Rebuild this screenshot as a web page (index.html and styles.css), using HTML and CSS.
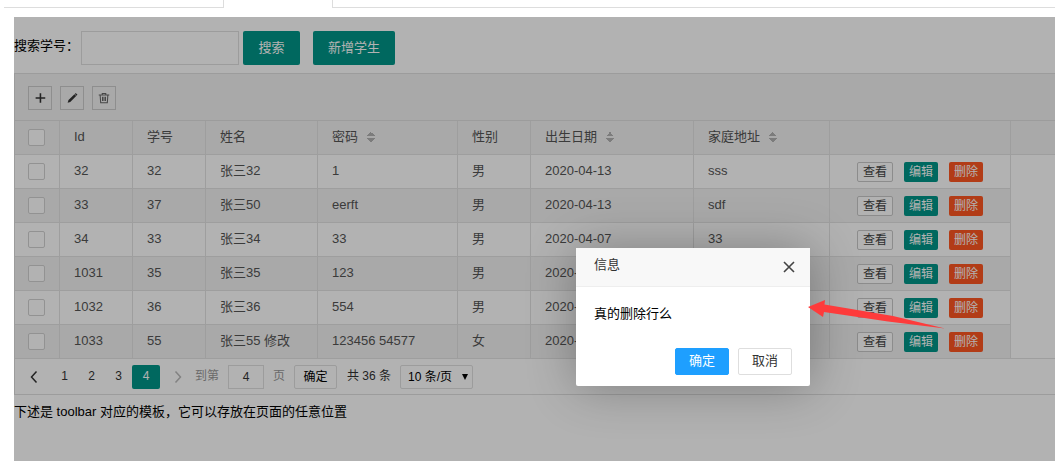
FILE: index.html
```html
<!DOCTYPE html>
<html lang="zh-CN">
<head>
<meta charset="utf-8">
<title>学生管理</title>
<link rel="stylesheet" href="styles.css">
</head>
<body>
<div class="tabs"><div class="tab tab-left"></div><div class="tab-active"></div><div class="tab tab-right"></div></div>
<main class="panel">
  <form class="search">
    <label for="sno">搜索学号：</label>
    <input id="sno" class="search-input" type="text">
    <button class="btn" type="button">搜索</button>
    <button class="btn btn-add" type="button">新增学生</button>
  </form>
  <section class="grid">
    <div class="toolbar">
      <button type="button" class="tool" aria-label="添加"><svg viewBox="0 0 16 16"><path d="M8.500 2.500v11M3 8h11" stroke="#333" stroke-width="1.800"/></svg></button>
      <button type="button" class="tool" aria-label="编辑"><svg viewBox="0 0 16 16"><path d="M3 13.500l1-3.200 6.800-6.500 2 2L6 12.500z" fill="#333"/><path d="M11.300 3.300l1-.9 1.900 1.900-1 1z" fill="#333"/></svg></button>
      <button type="button" class="tool" aria-label="删除"><svg viewBox="0 0 16 16" fill="none" stroke="#666" stroke-width="1.200"><path d="M2 4.500h12M6 4.500V2.800h4v1.700M3.600 4.500l.6 9h7.600l.6-9M6.300 6.500v5M8 6.500v5M9.700 6.500v5"/></svg></button>
    </div>
    <table class="table">
      <colgroup><col class="c-check"><col class="c-s"><col class="c-s"><col class="c-name"><col class="c-pwd"><col class="c-s"><col class="c-date"><col class="c-addr"><col class="c-ops"><col></colgroup>
      <thead><tr>
        <th><input type="checkbox" aria-label="全选"></th><th>Id</th><th>学号</th><th>姓名</th>
        <th>密码<span class="sort"></span></th><th>性别</th><th>出生日期<span class="sort"></span></th><th>家庭地址<span class="sort"></span></th><th></th><th class="rest"></th>
      </tr></thead>
      <tbody>
        <tr><td><input type="checkbox" aria-label="选择 32"></td><td>32</td><td>32</td><td>张三32</td><td>1</td><td>男</td><td>2020-04-13</td><td>sss</td><td class="ops"><div><button type="button" class="mini plain">查看</button><button type="button" class="mini">编辑</button><button type="button" class="mini danger">删除</button></div></td><td class="rest" rowspan="6"></td></tr>
        <tr><td><input type="checkbox" aria-label="选择 33"></td><td>33</td><td>37</td><td>张三50</td><td>eerft</td><td>男</td><td>2020-04-13</td><td>sdf</td><td class="ops"><div><button type="button" class="mini plain">查看</button><button type="button" class="mini">编辑</button><button type="button" class="mini danger">删除</button></div></td></tr>
        <tr><td><input type="checkbox" aria-label="选择 34"></td><td>34</td><td>33</td><td>张三34</td><td>33</td><td>男</td><td>2020-04-07</td><td>33</td><td class="ops"><div><button type="button" class="mini plain">查看</button><button type="button" class="mini">编辑</button><button type="button" class="mini danger">删除</button></div></td></tr>
        <tr><td><input type="checkbox" aria-label="选择 1031"></td><td>1031</td><td>35</td><td>张三35</td><td>123</td><td>男</td><td>2020-</td><td></td><td class="ops"><div><button type="button" class="mini plain">查看</button><button type="button" class="mini">编辑</button><button type="button" class="mini danger">删除</button></div></td></tr>
        <tr><td><input type="checkbox" aria-label="选择 1032"></td><td>1032</td><td>36</td><td>张三36</td><td>554</td><td>男</td><td>2020-</td><td></td><td class="ops"><div><button type="button" class="mini plain">查看</button><button type="button" class="mini">编辑</button><button type="button" class="mini danger">删除</button></div></td></tr>
        <tr><td><input type="checkbox" aria-label="选择 1033"></td><td>1033</td><td>55</td><td>张三55 修改</td><td>123456 54577</td><td>女</td><td>2020-</td><td></td><td class="ops"><div><button type="button" class="mini plain">查看</button><button type="button" class="mini">编辑</button><button type="button" class="mini danger">删除</button></div></td></tr>
      </tbody>
    </table>
    <nav class="pager">
      <a href="#" class="step" aria-label="上一页"><svg viewBox="0 0 12 12"><path d="M8.500 .5L3.500 6l5 5.500" fill="none" stroke="#333" stroke-width="1.500"/></svg></a>
      <a href="#">1</a><a href="#">2</a><a href="#">3</a><a href="#" class="current">4</a>
      <a href="#" class="step next" aria-label="下一页"><svg viewBox="0 0 12 12"><path d="M3.500 .5l5 5.500-5 5.500" fill="none" stroke="#bbb" stroke-width="1.500"/></svg></a>
      <label class="goto" for="page">到第</label><input id="page" class="page-input" type="text" value="4"><span class="goto">页</span>
      <button type="button" class="page-btn">确定</button>
      <span class="total">共 36 条</span>
      <span class="limit"><select aria-label="每页条数"><option>10 条/页</option></select></span>
    </nav>
  </section>
  <p class="note">下述是 toolbar 对应的模板，它可以存放在页面的任意位置</p>
  <div class="shade"></div>
  <div class="dialog" role="dialog" aria-labelledby="dlg-title">
    <header class="dialog-head"><span id="dlg-title">信息</span>
      <button type="button" class="close" aria-label="关闭"><svg viewBox="0 0 12 12"><path d="M1 1l10 10M11 1L1 11" stroke="#444" stroke-width="1.600"/></svg></button>
    </header>
    <p class="dialog-body">真的删除行么</p>
    <footer class="dialog-foot"><button type="button" class="ok">确定</button><button type="button" class="cancel">取消</button></footer>
  </div>
  <svg class="pointer" viewBox="0 0 138 30"><path d="M0 7L17 0l-.5 4.500L85 16l52 12.500L80 21.500 16 12l-1 5z" fill="#fe3b3b"/></svg>
</main>
</body>
</html>
```
FILE: styles.css
```css
* { box-sizing: border-box; }
body {
  margin: 0;
  min-height: 100vh;
  display: flex;
  flex-direction: column;
  overflow: hidden;
  background: #fff;
  color: #000;
  font: 13px/20px "Liberation Sans", "Noto Sans CJK SC", sans-serif;
}
button, input, select { font: inherit; color: inherit; margin: 0; padding: 0; }
a { color: inherit; text-decoration: none; }

.tabs { display: flex; height: 8px; margin-left: 4px; }
.tab { border-bottom: 1px solid #ddd; }
.tab-left { width: 220px; border-right: 1px solid #ddd; }
.tab-active { width: 108px; }
.tab-right { flex: 1; border-left: 1px solid #ddd; }

.panel {
  position: relative;
  flex: 1;
  margin: 9px 0 0 14px;
}
.shade { position: absolute; inset: 0; background: rgba(0, 0, 0, .3); }

.search { display: flex; align-items: center; padding: 14px 0 8px; }
.search label { width: 67px; white-space: nowrap; padding-bottom: 4px; }
.search-input { width: 158px; height: 34px; border: 1px solid #e0e0e0; background: #fff; }
.btn {
  height: 34px;
  margin-left: 4px;
  padding: 0 15px;
  min-width: 57px;
  border: 0;
  border-radius: 2px;
  background: #009688;
  color: #fff;
}
.btn-add { margin-left: 13px; }

.grid { border: 1px solid #e0e0e0; border-right: 0; }
.toolbar {
  display: flex;
  gap: 8px;
  padding: 12px 13px 10px;
  background: #f2f2f2;
  border-bottom: 1px solid #e0e0e0;
}
.tool {
  width: 24px;
  height: 24px;
  display: grid;
  place-items: center;
  border: 1px solid #ccc;
  background: none;
}
.tool svg { width: 14px; height: 14px; display: block; }

.table { width: 100%; table-layout: fixed; border-collapse: separate; border-spacing: 0; color: #555; }
.c-check { width: 45px; }
.c-s { width: 73px; }
.c-name { width: 112px; }
.c-pwd { width: 140px; }
.c-date { width: 163px; }
.c-addr { width: 136px; }
.c-ops { width: 181px; }
.table th, .table td {
  height: 34px;
  padding: 0 0 2px 14px;
  border: solid #e2e2e2;
  border-width: 0 1px 1px 0;
  text-align: left;
  font-weight: 400;
  line-height: 20px;
  white-space: nowrap;
}
.table th, .table tr:nth-child(even) td { background: #f2f2f2; }
.table .rest { border-right: 0; }
.table input {
  appearance: none;
  display: block;
  width: 17px;
  height: 17px;
  margin-top: 2px;
  border: 1px solid #d2d2d2;
  border-radius: 2px;
  background: #fff;
}
.table td:first-child, .table th:first-child { padding-left: 13px; }
.sort {
  display: inline-block;
  width: 8px;
  height: 10px;
  margin-left: 9px;
  vertical-align: -1px;
  background:
    conic-gradient(from 135deg at 50% 0, #b2b2b2 90deg, transparent 0) top / 8px 4px no-repeat,
    conic-gradient(from -45deg at 50% 100%, #b2b2b2 90deg, transparent 0) bottom / 8px 4px no-repeat;
}
.table .ops { padding: 0 0 0 27px; }
.ops div { display: flex; gap: 11px; }
.mini {
  height: 20px;
  padding: 0 5px;
  border: 0;
  border-radius: 2px;
  background: #009688;
  color: #fff;
  font-size: 12px;
  line-height: 18px;
}
.mini.plain { border: 1px solid #c9c9c9; background: #fff; color: #444; }
.mini.danger { background: #ff5722; }

.pager { display: flex; align-items: center; height: 35px; padding-left: 5px; color: #333; font-size: 12px; }
.pager a { width: 27px; height: 24px; line-height: 22px; text-align: center; }
.pager .step { display: grid; place-items: center; }
.pager .step:first-child { margin-right: 4px; }
.step svg { width: 12px; height: 12px; }
.pager .current { width: 28px; border-radius: 2px; background: #009688; color: #fff; }
.pager .next { margin: 0 4px; }
.goto { color: #999; padding-bottom: 2px; }
.page-input { width: 36px; height: 24px; margin: 0 9px; border: 1px solid #e0e0e0; background: #fff; text-align: center; }
.page-btn { width: 43px; height: 24px; margin: 0 10px 0 9px; border: 1px solid #e0e0e0; border-radius: 2px; background: #fff; color: #000; }
.total { margin-right: 9px; padding-bottom: 2px; }
.limit { position: relative; width: 73px; height: 24px; }
.limit select {
  appearance: none;
  width: 100%;
  height: 100%;
  padding-left: 7px;
  border: 1px solid #e0e0e0;
  border-radius: 2px;
  background: #fff;
  color: #000;
}
.limit::after {
  content: "";
  position: absolute;
  right: 5px;
  top: 9px;
  border: solid transparent;
  border-width: 6px 3px 0;
  border-top-color: #000;
}
.note { margin: 7px 0 0; }

.dialog {
  position: absolute;
  left: 562px;
  top: 231px;
  width: 234px;
  border-radius: 2px;
  background: #fff;
  box-shadow: 1px 1px 50px rgba(0, 0, 0, .3);
}
.dialog-head {
  display: flex;
  justify-content: space-between;
  align-items: center;
  height: 39px;
  padding: 0 15px 0 18px;
  border-bottom: 1px solid #eee;
  background: #f8f8f8;
  color: #333;
}
.dialog-head span { padding-bottom: 4px; }
.close { width: 12px; height: 12px; border: 0; background: none; }
.close svg { display: block; }
.dialog-body { margin: 0; padding: 17px 18px 24px; }
.dialog-foot { display: flex; justify-content: flex-end; gap: 9px; padding: 0 18px 11px; }
.dialog-foot button { width: 54px; height: 27px; padding-bottom: 2px; border: 1px solid #dedede; border-radius: 2px; background: #fff; color: #333; }
.dialog-foot .ok { border-color: #1e9fff; background: #1e9fff; color: #fff; }
.pointer { position: absolute; left: 794px; top: 283px; width: 138px; height: 30px; }
```
